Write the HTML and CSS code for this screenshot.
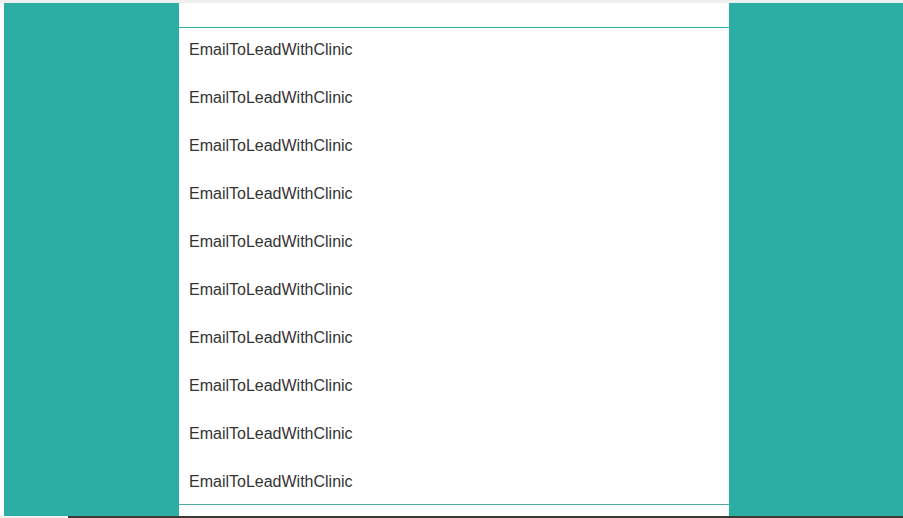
FILE: index.html
```html
<!DOCTYPE html>
<html>
<head>
<meta charset="utf-8">
<link rel="stylesheet" href="styles.css">
</head>
<body>
<div class="topstrip"></div>
<div class="main">
  <div class="gutter"></div>
  <div class="side"></div>
  <div class="panel">
    <div class="panel-head"></div>
    <div class="list">
      <div class="list-inner">
        <div class="row">EmailToLeadWithClinic</div>
        <div class="row">EmailToLeadWithClinic</div>
        <div class="row">EmailToLeadWithClinic</div>
        <div class="row">EmailToLeadWithClinic</div>
        <div class="row">EmailToLeadWithClinic</div>
        <div class="row">EmailToLeadWithClinic</div>
        <div class="row">EmailToLeadWithClinic</div>
        <div class="row">EmailToLeadWithClinic</div>
        <div class="row">EmailToLeadWithClinic</div>
        <div class="row">EmailToLeadWithClinic</div>
      </div>
    </div>
    <div class="panel-foot"></div>
  </div>
  <div class="side side-right"></div>
</div>
<div class="bottombar">
  <div class="bb-left"></div>
  <div class="bb-right"></div>
</div>
</body>
</html>
```
FILE: styles.css
```css
html, body {
  margin: 0;
  padding: 0;
  background: #ffffff;
  width: 903px;
  height: 518px;
  overflow: hidden;
  font-family: "Liberation Sans", Arial, sans-serif;
}
.topstrip {
  height: 3px;
  background: #efefef;
}
.main {
  display: flex;
  height: 513px;
}
.gutter {
  width: 4px;
  background: #ffffff;
}
.side {
  width: 175px;
  background: #2daea4;
}
.side-right {
  width: 174px;
}
.panel {
  width: 550px;
  background: #ffffff;
  display: flex;
  flex-direction: column;
}
.panel-head {
  height: 24px;
  border-bottom: 1px solid #2aaca3;
}
.list {
  height: 476px;
  overflow: hidden;
  border-bottom: 1px solid #4fa9a2;
}
.list-inner {
  margin-top: -2px;
}
.row {
  height: 48px;
  line-height: 48px;
  padding-left: 10px;
  font-size: 16px;
  color: #333333;
}
.panel-foot {
  flex: 1;
}
.bottombar {
  display: flex;
  height: 2px;
}
.bb-left {
  width: 68px;
  background: #f6efef;
}
.bb-right {
  flex: 1;
  background: #3b3b33;
}
```
